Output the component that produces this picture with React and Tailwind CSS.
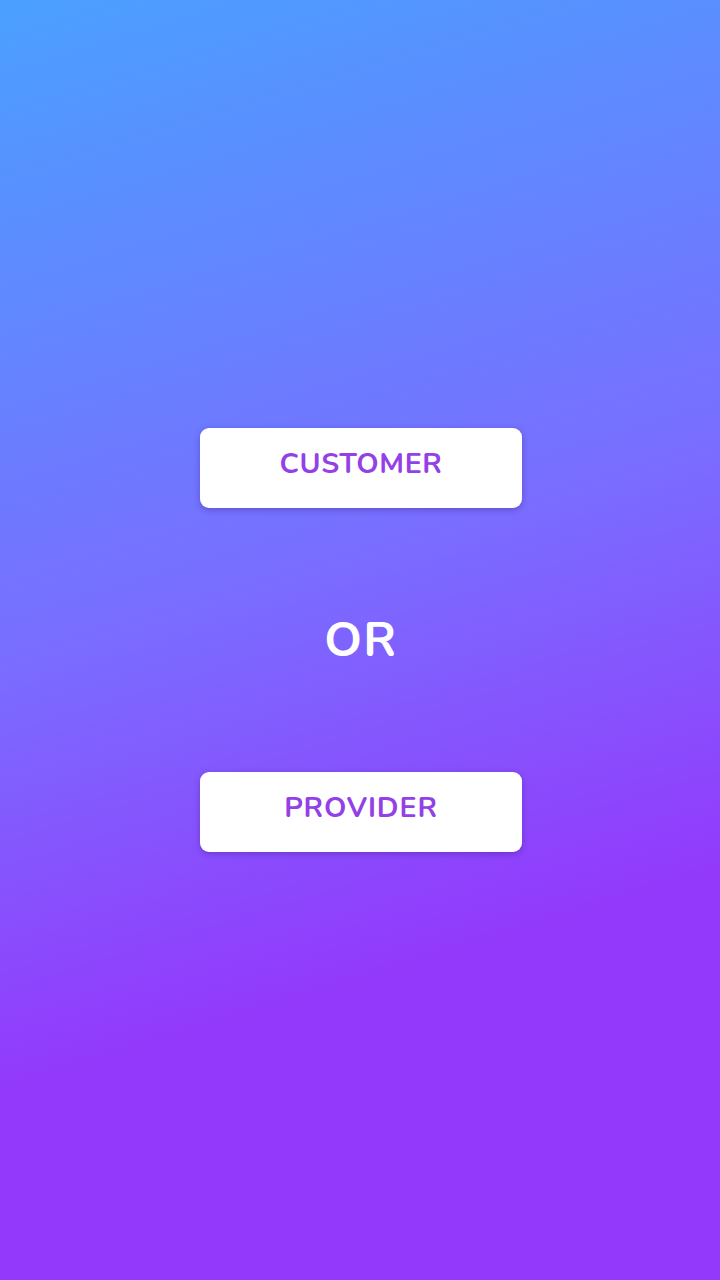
export default function App() {
  return (
    <div
      className="w-full min-h-screen h-[1280px] flex flex-col items-center justify-center bg-[linear-gradient(163deg,#4aa0ff_0%,#7a6cff_45%,#9339fb_73%,#9339fb_100%)]"
      style={{ fontFamily: '"Nunito", "Lato", "Noto Sans", sans-serif' }}
    >
      <button className="ml-[2px] w-[322px] h-[80px] bg-white rounded-[9px] shadow-[0_2px_6px_rgba(60,20,120,0.35)] flex items-center justify-center pb-[7px]">
        <span className="text-[28.5px] font-bold text-[#9341e6] tracking-[0.6px]">CUSTOMER</span>
      </button>
      <div className="ml-[2px] h-[264px] flex items-center justify-center">
        <span className="text-[48px] font-bold text-white tracking-[1.5px]">OR</span>
      </div>
      <button className="ml-[2px] w-[322px] h-[80px] bg-white rounded-[9px] shadow-[0_2px_6px_rgba(60,20,120,0.35)] flex items-center justify-center pb-[7px]">
        <span className="text-[28.5px] font-bold text-[#9341e6] tracking-[0.9px]">PROVIDER</span>
      </button>
    </div>
  );
}
